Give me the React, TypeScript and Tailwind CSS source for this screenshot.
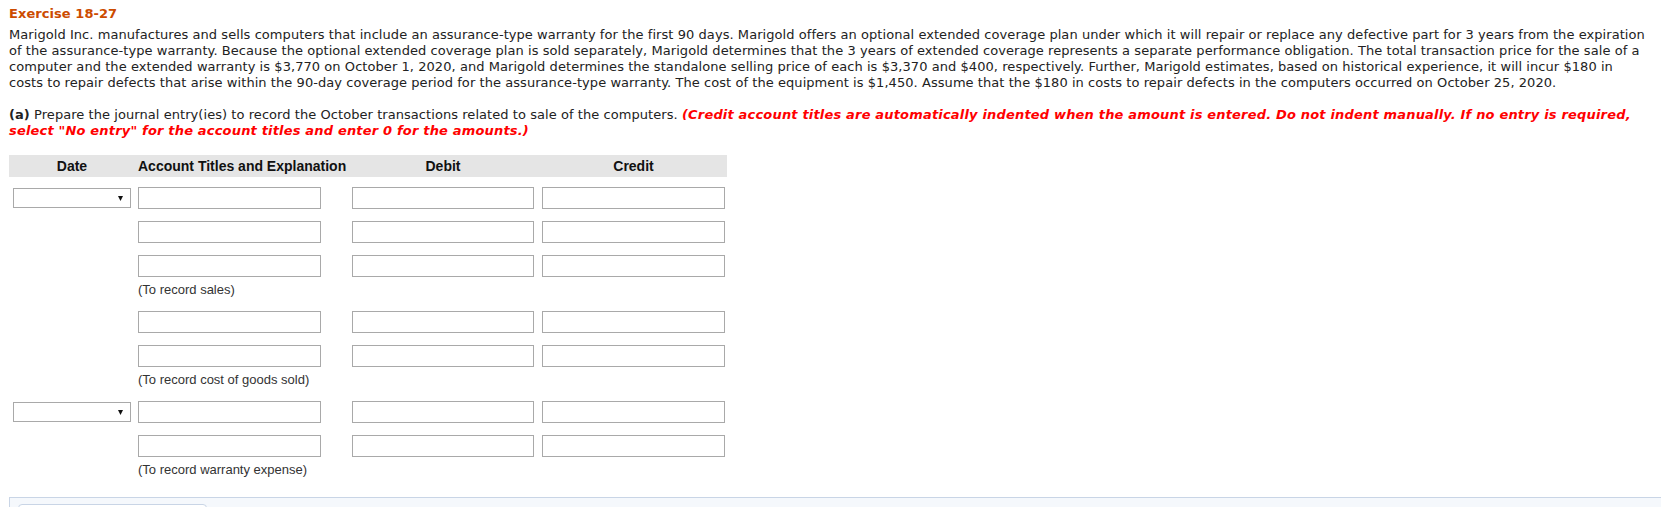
import React from 'react'

const verdana = { fontFamily: '"DejaVu Sans", Verdana, sans-serif' }
const tahoma = { fontFamily: '"Liberation Sans", Arial, sans-serif' }

function DateSelect() {
  return (
    <div className="relative mt-[1px] h-[20px] w-[118px] border border-[#a9a9a9] bg-white">
      <svg
        className="absolute left-[104px] top-[7px]"
        width="5"
        height="5"
        viewBox="0 0 5 5"
      >
        <polygon points="0,0 5,0 2.5,5" fill="#111" />
      </svg>
    </div>
  )
}

function Field({ className = '' }: { className?: string }) {
  return <div className={`h-[22px] border border-[#a9a9a9] bg-white ${className}`} />
}

function EntryRow({ withDate = false, className = '' }: { withDate?: boolean; className?: string }) {
  return (
    <div className={`flex items-start pl-[4px] ${className}`}>
      <div className="w-[118px]">{withDate ? <DateSelect /> : null}</div>
      <Field className="ml-[7px] w-[183px]" />
      <Field className="ml-[31px] w-[182px]" />
      <Field className="ml-[8px] w-[183px]" />
    </div>
  )
}

function Note({ text }: { text: string }) {
  return (
    <div
      className="mt-[6px] h-[14px] pl-[129px] text-[13px] leading-[14px] text-[#333]"
      style={tahoma}
    >
      {text}
    </div>
  )
}

export default function App() {
  return (
    <div className="h-[507px] w-[1661px] overflow-hidden bg-white">
      <div
        className="pl-[9px] pt-[6px] whitespace-nowrap text-[13px] leading-[16px] tracking-[0.06px] text-[#222]"
        style={verdana}
      >
        <p className="font-bold text-[#cc4b00]">Exercise 18-27</p>
        <p className="mt-[5px]">
          Marigold Inc. manufactures and sells computers that include an assurance-type warranty for the first 90 days. Marigold offers an optional extended coverage plan under which it will repair or replace any defective part for 3 years from the expiration
          <br />
          of the assurance-type warranty. Because the optional extended coverage plan is sold separately, Marigold determines that the 3 years of extended coverage represents a separate performance obligation. The total transaction price for the sale of a
          <br />
          computer and the extended warranty is $3,770 on October 1, 2020, and Marigold determines the standalone selling price of each is $3,370 and $400, respectively. Further, Marigold estimates, based on historical experience, it will incur $180 in
          <br />
          costs to repair defects that arise within the 90-day coverage period for the assurance-type warranty. The cost of the equipment is $1,450. Assume that the $180 in costs to repair defects in the computers occurred on October 25, 2020.
        </p>
        <p className="mt-[16px]">
          <b>(a)</b> Prepare the journal entry(ies) to record the October transactions related to sale of the computers.{' '}
          <b className="italic tracking-[0.18px] text-[#ff0000]">
            (Credit account titles are automatically indented when the amount is entered. Do not indent manually. If no entry is required,
            <br />
            select "No entry" for the account titles and enter 0 for the amounts.)
          </b>
        </p>
      </div>

      <div className="ml-[9px] mt-[16px]">
        <div
          className="flex h-[22px] w-[718px] items-center whitespace-nowrap bg-[#e5e5e5] pl-[4px] text-[14px] font-bold text-[#111]"
          style={tahoma}
        >
          <div className="w-[118px] text-center">Date</div>
          <div className="ml-[7px] w-[183px]">Account Titles and Explanation</div>
          <div className="ml-[31px] w-[182px] text-center">Debit</div>
          <div className="ml-[8px] w-[183px] text-center">Credit</div>
        </div>

        <EntryRow withDate className="mt-[10px]" />
        <EntryRow className="mt-[12px]" />
        <EntryRow className="mt-[12px]" />
        <Note text="(To record sales)" />

        <EntryRow className="mt-[14px]" />
        <EntryRow className="mt-[12px]" />
        <Note text="(To record cost of goods sold)" />

        <EntryRow withDate className="mt-[14px]" />
        <EntryRow className="mt-[12px]" />
        <Note text="(To record warranty expense)" />
      </div>

      <div className="ml-[9px] mt-[20px] h-[40px] border-t border-l border-[#c9d5e6] bg-[#f5f8fc] pl-[8px] pt-[6px]">
        <div className="h-[30px] w-[189px] rounded-[4px] border border-[#c9d5e6] bg-white" />
      </div>
    </div>
  )
}
